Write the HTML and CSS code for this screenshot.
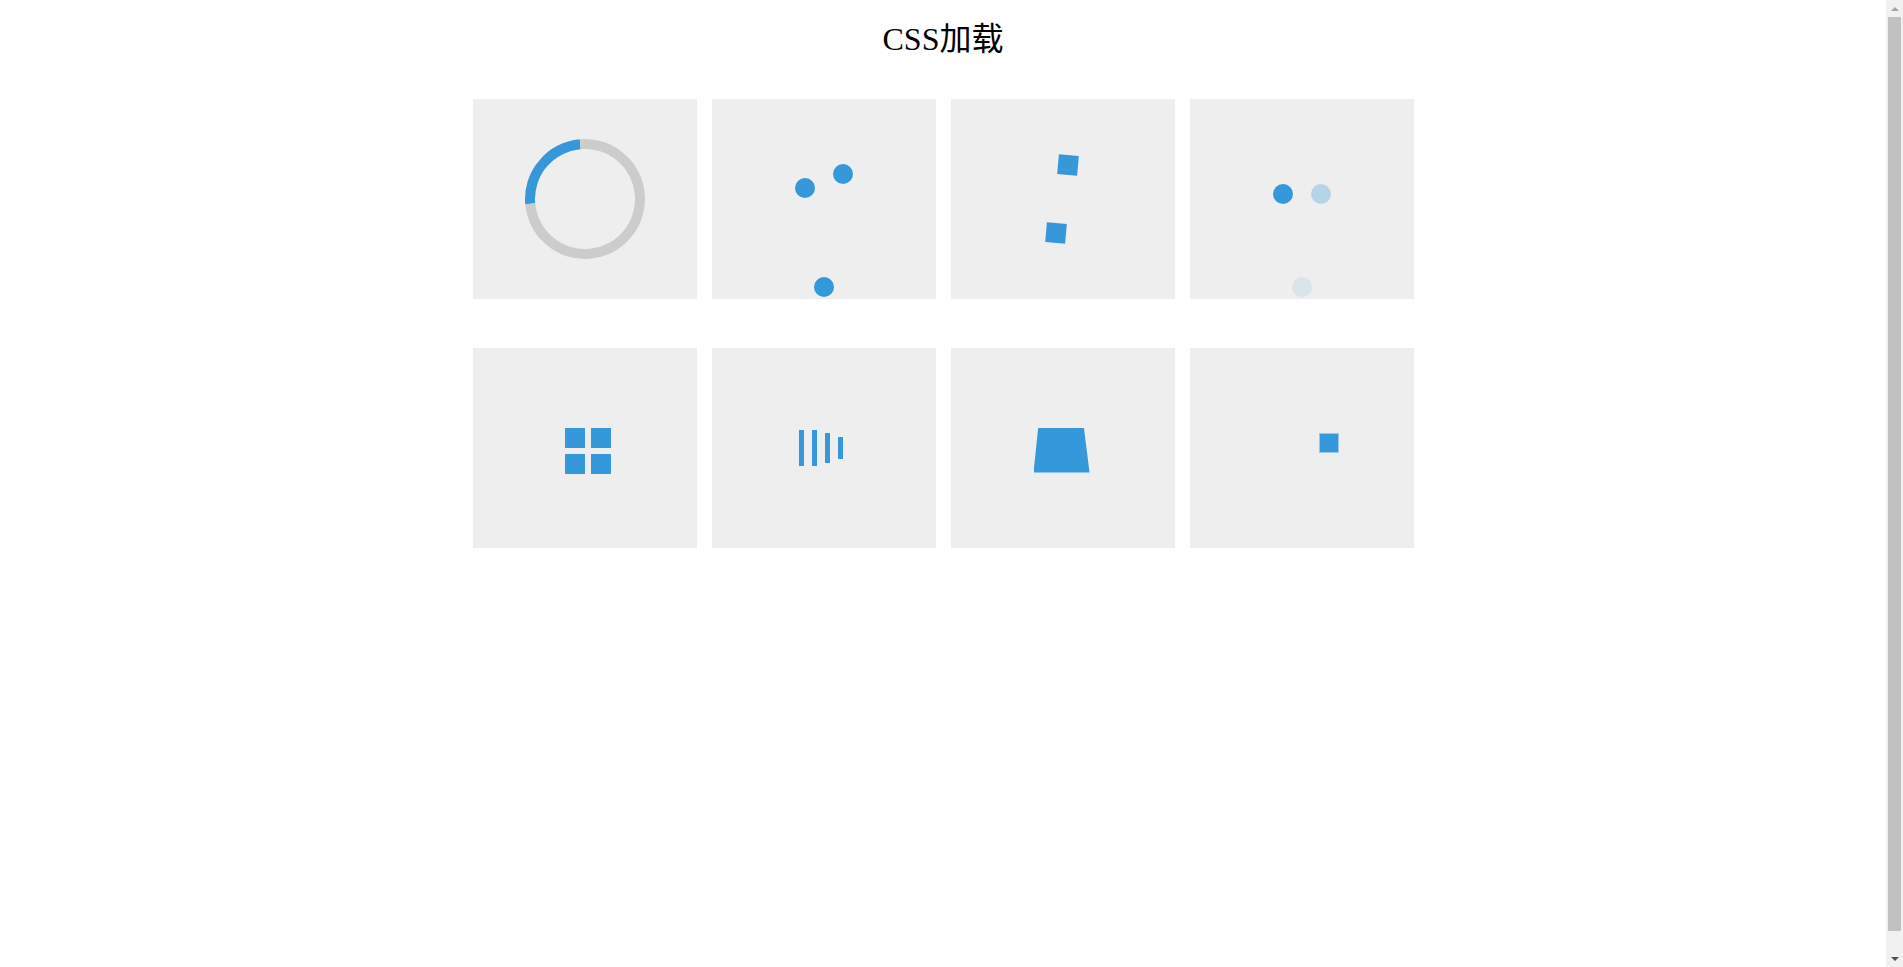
FILE: index.html
```html
<!DOCTYPE html>
<html lang="zh-CN">
<head>
<meta charset="utf-8">
<title>CSS加载</title>
<link rel="stylesheet" href="styles.css">
</head>
<body>
<div class="page">
  <h1 class="title">CSS加载</h1>
  <div class="grid">
    <div class="box">
      <div class="ring"></div>
    </div>
    <div class="box">
      <span class="dot" style="left:83px;top:79px"></span>
      <span class="dot" style="left:121px;top:65px"></span>
      <span class="dot" style="left:102px;top:178px"></span>
    </div>
    <div class="box">
      <span class="tile" style="left:107px;top:56px"></span>
      <span class="tile" style="left:95px;top:124px"></span>
    </div>
    <div class="box">
      <span class="dot" style="left:83px;top:85px"></span>
      <span class="dot faint1" style="left:121px;top:85px"></span>
      <span class="dot faint2" style="left:102px;top:178px"></span>
    </div>

    <div class="box">
      <div class="quad">
        <span></span><span></span><span></span><span></span>
      </div>
    </div>
    <div class="box">
      <div class="bars">
        <span class="b1"></span><span class="b2"></span><span class="b3"></span><span class="b4"></span>
      </div>
    </div>
    <div class="box">
      <div class="trap"></div>
    </div>
    <div class="box">
      <span class="small" style="left:129px;top:85px"></span>
    </div>
  </div>
</div>
<div class="scrollbar" aria-hidden="true">
  <span class="arrow up"></span>
  <span class="thumb"></span>
  <span class="arrow down"></span>
</div>
</body>
</html>
```

FILE: styles.css
```css
html, body {
  margin: 0;
  padding: 0;
  background: #fff;
}

body {
  padding-right: 17px;
}

.page {
  font-family: "Liberation Serif", "Noto Sans CJK SC", serif;
}

.title {
  margin: 19px 0 40px;
  font-size: 32px;
  line-height: 40px;
  font-weight: normal;
  text-align: center;
  color: #000;
}

.grid {
  display: grid;
  grid-template-columns: repeat(4, 224px);
  grid-auto-rows: 200px;
  column-gap: 15px;
  row-gap: 49px;
  width: 941px;
  margin: 0 auto;
}

.box {
  position: relative;
  background: #eee;
  display: flex;
  align-items: center;
  justify-content: center;
  overflow: hidden;
}

.ring {
  width: 100px;
  height: 100px;
  border: 10px solid #ccc;
  border-top-color: #3498db;
  border-radius: 50%;
  transform: rotate(-50deg);
}

.dot {
  position: absolute;
  width: 20px;
  height: 20px;
  border-radius: 50%;
  background: #3498db;
}

.dot.faint1 {
  background: rgba(52, 152, 219, 0.3);
}

.dot.faint2 {
  background: rgba(52, 152, 219, 0.1);
}

.tile {
  position: absolute;
  width: 20px;
  height: 20px;
  background: #3498db;
  transform: rotate(5deg);
}

.quad {
  display: grid;
  grid-template-columns: 20px 20px;
  grid-auto-rows: 20px;
  gap: 6px;
  transform: translate(3px, 3px);
}

.quad span {
  background: #3498db;
}

.bars {
  display: flex;
  align-items: center;
  gap: 8px;
  margin-right: 6px;
}

.bars span {
  width: 5px;
  background: #3498db;
}

.bars .b1, .bars .b2 { height: 36px; }
.bars .b3 { height: 30px; }
.bars .b4 { height: 22px; }

.trap {
  width: 56px;
  height: 45px;
  margin-top: 4px;
  margin-left: -2px;
  background: #3498db;
  clip-path: polygon(4.7px 0, 50.4px 0, 56px 45px, 0 45px);
}

.small {
  position: absolute;
  width: 18px;
  height: 18px;
  background: #3498db;
  border: 1px solid #9cc6e6;
}

/* classic browser scrollbar drawn over the right edge */
.scrollbar {
  position: fixed;
  top: 0;
  right: 0;
  width: 17px;
  height: 100%;
  background: #f1f1f1;
  display: flex;
  flex-direction: column;
  align-items: center;
}

.scrollbar .arrow {
  flex: 0 0 17px;
  width: 17px;
  display: flex;
  align-items: center;
  justify-content: center;
}

.scrollbar .arrow::before {
  content: "";
  width: 0;
  height: 0;
  border-left: 4px solid transparent;
  border-right: 4px solid transparent;
}

.scrollbar .up::before {
  border-bottom: 4px solid #a3a3a3;
}

.scrollbar .down::before {
  border-top: 4px solid #505050;
}

.scrollbar .thumb {
  flex: 1;
  width: 13px;
  margin-bottom: 19px;
  background: #c1c1c1;
}
```
